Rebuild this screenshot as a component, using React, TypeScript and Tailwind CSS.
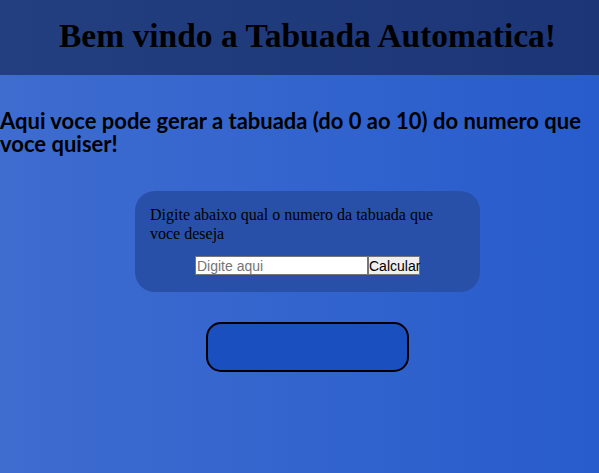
export default function App() {
  return (
    <div className="min-h-[473px] w-full bg-gradient-to-r from-[#3e6ccf] to-[#285ccc] pb-10">
      <header className="h-[75px] bg-gradient-to-r from-[#233f7f] to-[#1c3577] flex items-center justify-center pl-[16px]">
        <h1 className="text-[33.5px] font-bold text-black font-['Liberation_Serif',serif] -mt-[2px]">
          Bem vindo a Tabuada Automatica!
        </h1>
      </header>

      <h2 className="mt-[34px] text-[22px] leading-[23px] font-bold text-black font-['Lato',sans-serif]">
        Aqui voce pode gerar a tabuada (do 0 ao 10) do numero que voce quiser!
      </h2>

      <div className="pl-[16px]">
        <div className="mt-[36px] mx-auto w-[345px] h-[101px] rounded-[20px] bg-[#2950a8] pt-[14px] px-[15px]">
          <p className="w-[300px] text-[16px] leading-[19px] text-black font-['Liberation_Serif',serif]">
            Digite abaixo qual o numero da tabuada que voce deseja
          </p>
          <div className="mt-[13px] flex justify-center">
            <input
              type="text"
              placeholder="Digite aqui"
              className="w-[173px] h-[19px] bg-white border border-[#767676] text-[14px] leading-none px-[1px] placeholder:text-[#757575] font-['Liberation_Sans',sans-serif] outline-none"
            />
            <button className="h-[19px] w-[52px] bg-[#efefef] border border-[#767676] text-[14px] leading-none text-black font-['Liberation_Sans',sans-serif]">
              Calcular
            </button>
          </div>
        </div>

        <div className="mt-[30px] mx-auto w-[203px] h-[50px] rounded-[15px] border-2 border-black bg-[#1a4fc0]" />
      </div>
    </div>
  );
}
